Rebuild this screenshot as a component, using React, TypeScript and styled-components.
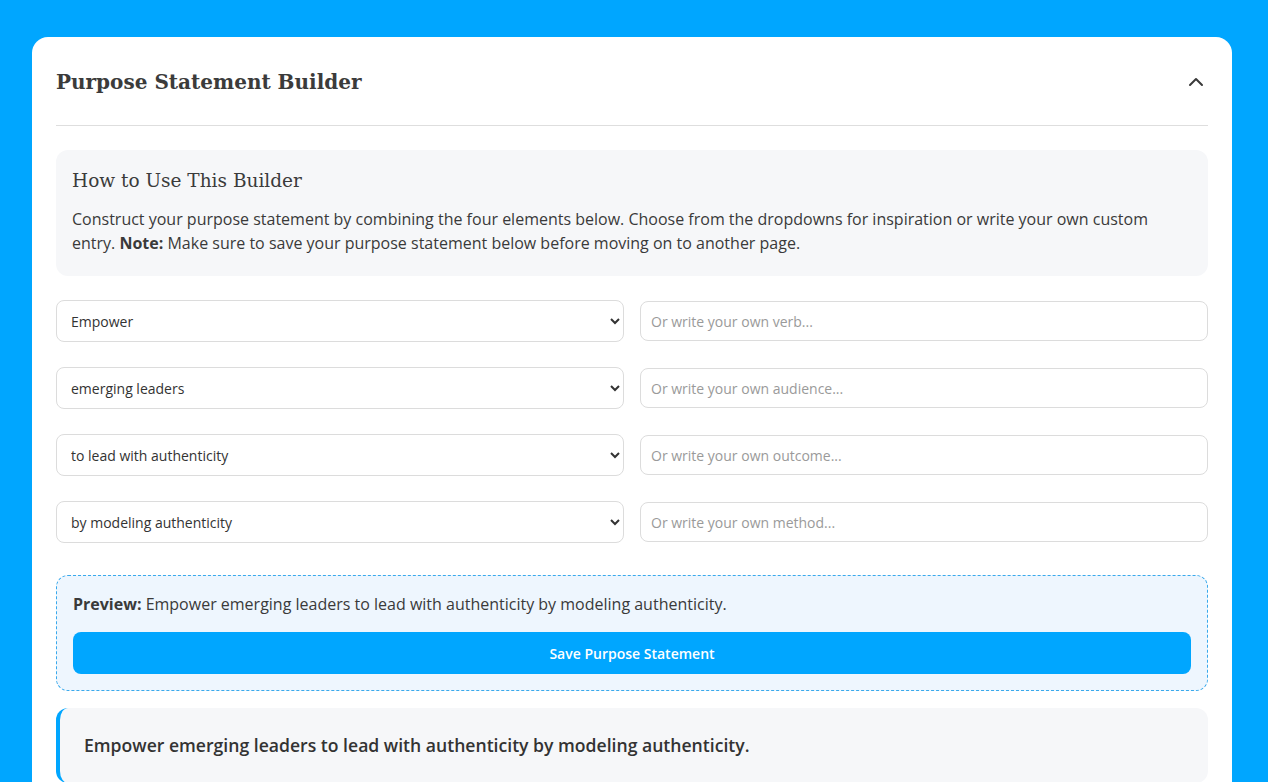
import React, { useState } from 'react'
import styled, { createGlobalStyle } from 'styled-components'
import { ChevronUp } from 'lucide-react'

const GlobalStyle = createGlobalStyle`
  html, body {
    margin: 0;
    padding: 0;
    background: #00a6ff;
  }
  * {
    box-sizing: border-box;
  }
`

const Page = styled.div`
  min-height: 100vh;
  padding: 37px 32px 0;
  font-family: 'Open Sans', 'Liberation Sans', sans-serif;
  color: #3a3a3a;
`

const Card = styled.section`
  max-width: 1200px;
  background: #ffffff;
  border-radius: 16px 16px 0 0;
  padding: 24px 24px 0;
`

const Header = styled.header`
  display: flex;
  align-items: center;
  justify-content: space-between;
  height: 40px;
  margin-top: -24px;
  padding: 25px 0 23px;
  box-sizing: content-box;
  border-bottom: 1px solid #dedede;
`

const Title = styled.h1`
  margin: 0;
  font-family: 'Roboto Slab', 'DejaVu Serif', serif;
  font-size: 20px;
  font-weight: 700;
  color: #3b3b3b;
`

const Toggle = styled.button`
  display: flex;
  align-items: center;
  justify-content: center;
  width: 24px;
  height: 24px;
  padding: 0;
  border: none;
  background: none;
  color: #3a3a3a;
  cursor: pointer;
`

const Body = styled.div`
  display: flex;
  flex-direction: column;
  padding-top: 24px;
`

const Info = styled.div`
  background: #f6f7f9;
  border-radius: 12px;
  padding: 17px 16px 21px;
`

const InfoTitle = styled.h2`
  margin: 0 0 12px;
  font-family: 'Roboto Slab', 'DejaVu Serif', serif;
  font-size: 18.5px;
  font-weight: 400;
  line-height: 28px;
  color: #3b3b3b;
`

const InfoText = styled.p`
  margin: 0;
  font-size: 16px;
  line-height: 24px;
  color: #3a3a3a;

  strong {
    font-weight: 700;
  }
`

const Fields = styled.div`
  display: flex;
  flex-direction: column;
  gap: 25px;
  margin-top: 24px;
`

const Row = styled.div`
  display: grid;
  grid-template-columns: 1fr 1fr;
  gap: 16px;
  align-items: center;
`

const Select = styled.select`
  height: 42px;
  width: 100%;
  padding: 1px 10px 0;
  border: 1px solid #dcdcdc;
  border-radius: 8px;
  background: #ffffff;
  font-family: 'Open Sans', 'Liberation Sans', sans-serif;
  font-size: 14px;
  color: #333333;
  outline: none;
`

const Input = styled.input`
  height: 40px;
  width: 100%;
  padding: 0 10px;
  border: 1px solid #dcdcdc;
  border-radius: 8px;
  font-family: 'Open Sans', 'Liberation Sans', sans-serif;
  font-size: 14px;
  color: #333333;
  outline: none;

  &::placeholder {
    color: #9a9a9a;
  }
`

const Preview = styled.div`
  margin-top: 32px;
  padding: 16px;
  border: 1px dashed #39a9ec;
  border-radius: 12px;
  background: #eef6fe;
`

const PreviewText = styled.p`
  margin: 0;
  font-size: 16px;
  line-height: 24px;
  color: #3a3a3a;

  strong {
    font-weight: 700;
  }
`

const SaveButton = styled.button`
  display: block;
  width: 100%;
  height: 42px;
  margin-top: 16px;
  border: none;
  border-radius: 8px;
  background: #00a6ff;
  color: #ffffff;
  font-family: 'Open Sans', 'Liberation Sans', sans-serif;
  font-size: 14px;
  font-weight: 600;
  cursor: pointer;
`

const Statement = styled.div`
  margin-top: 17px;
  padding: 24px;
  border-left: 4px solid #00a6ff;
  border-radius: 12px;
  background: #f6f7f9;
  font-size: 17.6px;
  font-weight: 600;
  line-height: 27px;
  color: #333333;
`

const fields = [
  {
    options: ['Empower', 'Inspire', 'Equip', 'Guide'],
    placeholder: 'Or write your own verb...',
  },
  {
    options: ['emerging leaders', 'teams', 'educators', 'communities'],
    placeholder: 'Or write your own audience...',
  },
  {
    options: ['to lead with authenticity', 'to grow with confidence', 'to thrive together'],
    placeholder: 'Or write your own outcome...',
  },
  {
    options: ['by modeling authenticity', 'by coaching with care', 'by sharing stories'],
    placeholder: 'Or write your own method...',
  },
]

export default function App() {
  const [picks, setPicks] = useState(fields.map((f) => f.options[0]))
  const [custom, setCustom] = useState(fields.map(() => ''))

  const statement = picks.map((p, i) => custom[i] || p).join(' ') + '.'

  return (
    <Page>
      <GlobalStyle />
      <Card>
        <Header>
          <Title>Purpose Statement Builder</Title>
          <Toggle aria-label="Collapse">
            <ChevronUp size={24} strokeWidth={2} />
          </Toggle>
        </Header>
        <Body>
          <Info>
            <InfoTitle>How to Use This Builder</InfoTitle>
            <InfoText>
              Construct your purpose statement by combining the four elements below. Choose from the dropdowns for
              inspiration or write your own custom entry. <strong>Note:</strong> Make sure to save your purpose
              statement below before moving on to another page.
            </InfoText>
          </Info>
          <Fields>
            {fields.map((f, i) => (
              <Row key={f.placeholder}>
                <Select
                  value={picks[i]}
                  onChange={(e) => setPicks(picks.map((p, j) => (j === i ? e.target.value : p)))}
                >
                  {f.options.map((o) => (
                    <option key={o}>{o}</option>
                  ))}
                </Select>
                <Input
                  placeholder={f.placeholder}
                  value={custom[i]}
                  onChange={(e) => setCustom(custom.map((c, j) => (j === i ? e.target.value : c)))}
                />
              </Row>
            ))}
          </Fields>
          <Preview>
            <PreviewText>
              <strong>Preview:</strong> {statement}
            </PreviewText>
            <SaveButton>Save Purpose Statement</SaveButton>
          </Preview>
          <Statement>{statement}</Statement>
        </Body>
      </Card>
    </Page>
  )
}
